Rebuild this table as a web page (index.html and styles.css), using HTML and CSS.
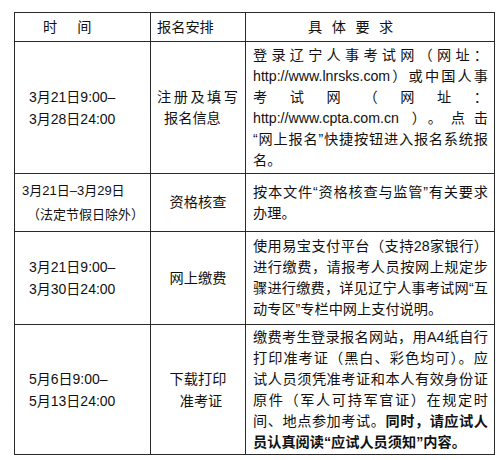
FILE: index.html
```html
<!DOCTYPE html>
<html lang="zh-CN">
<head>
<meta charset="utf-8">
<link rel="stylesheet" href="styles.css">
</head>
<body>
<table class="plan">
  <colgroup>
    <col class="c1"><col class="c2"><col class="c3">
  </colgroup>
  <tr class="r-head">
    <td class="h-time"><span>时</span><span>间</span></td>
    <td class="h-plan">报名安排</td>
    <td class="h-req">具体要求</td>
  </tr>
  <tr class="r1">
    <td class="time"><div>3月21日9:00–</div><div>3月28日24:00</div></td>
    <td class="plan-cell left"><div class="j">注册及填写</div><div class="ind">报名信息</div></td>
    <td class="req">
      <div class="j">登录辽宁人事考试网（网址：</div>
      <div class="j">http://www.lnrsks.com）或中国人事</div>
      <div class="j">考 试 网 （ 网 址 ：</div>
      <div class="j">http://www.cpta.com.cn ）。点击</div>
      <div class="j">“网上报名”快捷按钮进入报名系统报</div>
      <div>名。</div>
    </td>
  </tr>
  <tr class="r2">
    <td class="time small"><div>3月21日–3月29日</div><div class="paren">（法定节假日除外）</div></td>
    <td class="plan-cell">资格核查</td>
    <td class="req">
      <div class="j">按本文件“资格核查与监管”有关要求</div>
      <div>办理。</div>
    </td>
  </tr>
  <tr class="r3">
    <td class="time"><div>3月21日9:00–</div><div>3月30日24:00</div></td>
    <td class="plan-cell">网上缴费</td>
    <td class="req">
      <div class="j">使用易宝支付平台（支持28家银行）</div>
      <div class="j">进行缴费，请报考人员按网上规定步</div>
      <div class="j">骤进行缴费，详见辽宁人事考试网“互</div>
      <div>动专区”专栏中网上支付说明。</div>
    </td>
  </tr>
  <tr class="r4">
    <td class="time"><div>5月6日9:00–</div><div>5月13日24:00</div></td>
    <td class="plan-cell"><div>下载打印</div><div class="ind2">准考证</div></td>
    <td class="req">
      <div class="j">缴费考生登录报名网站，用A4纸自行</div>
      <div class="j">打印准考证（黑白、彩色均可）。应</div>
      <div class="j">试人员须凭准考证和本人有效身份证</div>
      <div class="j">原件（军人可持军官证）在规定时</div>
      <div class="j">间、地点参加考试。<b>同时，请应试人</b></div>
      <div><b>员认真阅读“应试人员须知”内容。</b></div>
    </td>
  </tr>
</table>
</body>
</html>
```

FILE: styles.css
```css
html, body {
  margin: 0;
  padding: 0;
  background: #fff;
}
body {
  padding: 12px 0 0 14px;
  font-family: "Liberation Sans", "Noto Sans CJK SC", sans-serif;
  color: #111;
}
.plan {
  border-collapse: collapse;
  table-layout: fixed;
  width: 480px;
}
.c1 { width: 136px; }
.c2 { width: 95px; }
.c3 { width: 249px; }
.plan td {
  border: 1px solid #2a2a2a;
  padding: 0;
  vertical-align: middle;
  font-size: 14.2px;
  line-height: 21px;
  overflow: hidden;
}
.plan td div {
  height: 21px;
  white-space: nowrap;
}
.r-head { height: 29px; }
.r1 { height: 132px; }
.r2 { height: 58px; }
.r3 { height: 93px; }
.r4 { height: 130px; }

.h-time {
  padding-left: 28px !important;
}
.h-time span + span {
  margin-left: 20px;
}
.h-plan {
  padding-left: 6px !important;
}
.h-req {
  padding-left: 62px !important;
  letter-spacing: 9.5px;
}
.time {
  padding-left: 14px !important;
  font-size: 14px !important;
}
.plan td.time div {
  height: 22px;
  line-height: 22px;
}
.plan td.time.small {
  padding-left: 7px !important;
  font-size: 13px !important;
}
.plan td.time.small div {
  height: 24px;
  line-height: 24px;
}
.plan td.time.small .paren {
  padding-left: 5px;
}
.plan-cell {
  text-align: center;
}
.plan td.plan-cell div {
  height: 22px;
  line-height: 22px;
}
.plan td.plan-cell.left {
  text-align: left;
  padding: 0 7px 0 6px;
}
.plan td.plan-cell.left div {
  height: 21px;
  line-height: 21px;
}
.ind { padding-left: 7px; }
.ind2 { padding-left: 6px; }
.plan td.req {
  padding: 0 6px 0 7px;
  text-align: left;
}
.plan td .j {
  white-space: normal;
  text-align: justify;
  text-align-last: justify;
}
b { font-weight: 700; }
```
